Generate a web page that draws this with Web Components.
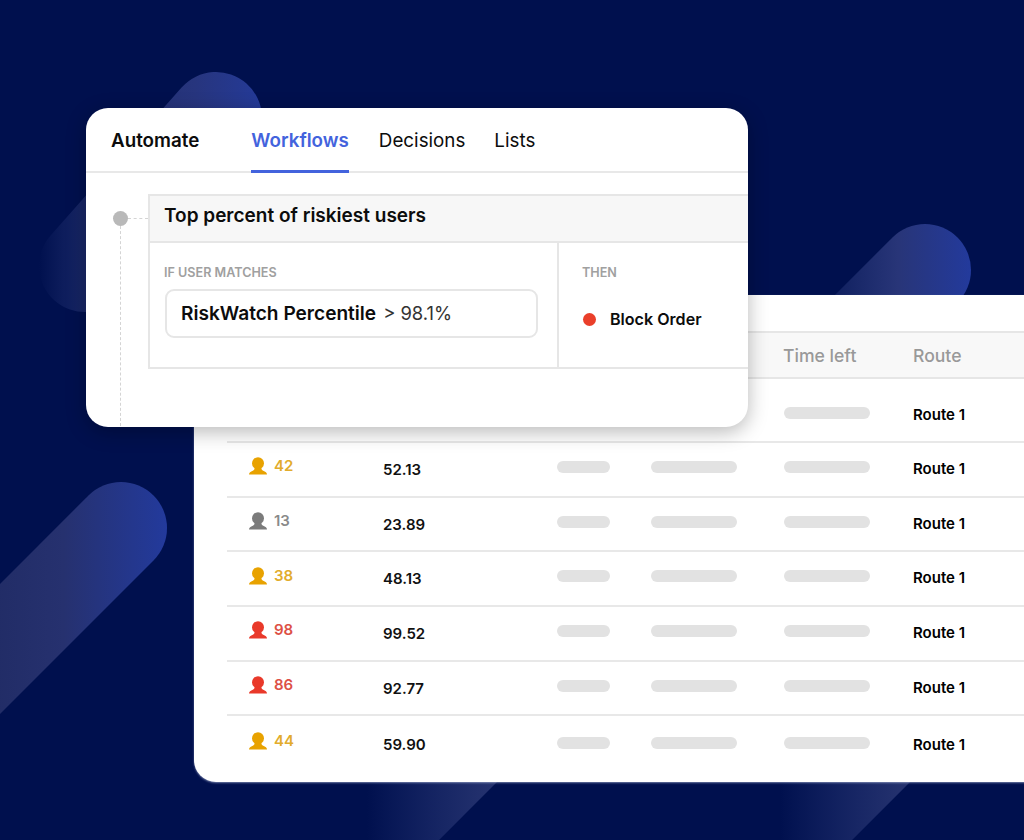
<!DOCTYPE html>
<html>
<head>
<meta charset="utf-8">
<title>Automate</title>
<style>
  html, body { margin: 0; padding: 0; background: #00104e; }
  body { font-family: Inter, "Liberation Sans", sans-serif; }
</style>
</head>
<body>

<hero-canvas>
  <bg-streaks></bg-streaks>

  <table-card>
    <risk-row route="Route 1" first></risk-row>
    <risk-row score="42" value="52.13" tone="amber" route="Route 1"></risk-row>
    <risk-row score="13" value="23.89" tone="gray" route="Route 1"></risk-row>
    <risk-row score="38" value="48.13" tone="amber" route="Route 1"></risk-row>
    <risk-row score="98" value="99.52" tone="red" route="Route 1"></risk-row>
    <risk-row score="86" value="92.77" tone="red" route="Route 1"></risk-row>
    <risk-row score="44" value="59.90" tone="amber" route="Route 1" last></risk-row>
  </table-card>

  <automate-card>
    <span slot="title">Top percent of riskiest users</span>
    <b slot="field">RiskWatch Percentile</b>
    <span slot="rule">&gt; 98.1%</span>
    <span slot="action">Block Order</span>
  </automate-card>
</hero-canvas>

<script>
class HeroCanvas extends HTMLElement {
  constructor() {
    super();
    this.attachShadow({ mode: 'open' });
    this.shadowRoot.innerHTML = `
      <style>
        :host {
          display: block;
          position: relative;
          width: 1024px;
          height: 840px;
          overflow: hidden;
          background: #00104e;
          font-family: Inter, "Liberation Sans", sans-serif;
        }
      </style>
      <slot></slot>
    `;
  }
}

// the soft diagonal bars behind the cards
class BgStreaks extends HTMLElement {
  constructor() {
    super();
    this.attachShadow({ mode: 'open' });
    this.shadowRoot.innerHTML = `
      <style>
        :host { position: absolute; inset: 0; display: block; }
        svg { display: block; }
      </style>
      <svg width="1024" height="840" viewBox="0 0 1024 840" fill="none">
        <defs>
          <linearGradient id="a" gradientUnits="userSpaceOnUse" x1="39" y1="0" x2="262" y2="0">
            <stop offset="0" stop-color="#2a3a7c" stop-opacity="0"/>
            <stop offset=".3" stop-color="#263272" stop-opacity=".9"/>
            <stop offset=".7" stop-color="#27357e"/>
            <stop offset="1" stop-color="#243a98"/>
          </linearGradient>
          <linearGradient id="b" gradientUnits="userSpaceOnUse" x1="-40" y1="0" x2="167" y2="0">
            <stop offset="0" stop-color="#1f2a62"/>
            <stop offset=".5" stop-color="#26316f"/>
            <stop offset="1" stop-color="#233a9c"/>
          </linearGradient>
          <linearGradient id="c" gradientUnits="userSpaceOnUse" x1="825" y1="0" x2="971" y2="0">
            <stop offset="0" stop-color="#2a3a7c" stop-opacity=".3"/>
            <stop offset=".5" stop-color="#283578"/>
            <stop offset="1" stop-color="#233a9c"/>
          </linearGradient>
          <linearGradient id="d" gradientUnits="userSpaceOnUse" x1="367" y1="0" x2="497" y2="0">
            <stop offset="0" stop-color="#2a3a7c" stop-opacity="0"/>
            <stop offset="1" stop-color="#26336f"/>
          </linearGradient>
          <linearGradient id="e" gradientUnits="userSpaceOnUse" x1="780" y1="0" x2="910" y2="0">
            <stop offset="0" stop-color="#2a3a7c" stop-opacity="0"/>
            <stop offset="1" stop-color="#26336f"/>
          </linearGradient>
        </defs>
        <g stroke-width="92" stroke-linecap="round">
          <line x1="216" y1="118" x2="85" y2="266" stroke="url(#a)"/>
          <line x1="121" y1="528" x2="-180" y2="829" stroke="url(#b)"/>
          <line x1="925" y1="270" x2="760" y2="435" stroke="url(#c)"/>
          <line x1="500" y1="714" x2="340" y2="874" stroke="url(#d)"/>
          <line x1="913" y1="714" x2="753" y2="874" stroke="url(#e)"/>
        </g>
      </svg>
    `;
  }
}

class TableCard extends HTMLElement {
  constructor() {
    super();
    this.attachShadow({ mode: 'open' });
    this.shadowRoot.innerHTML = `
      <style>
        :host {
          position: absolute;
          left: 194px;
          top: 295px;
          width: 870px;
          height: 487px;
          box-sizing: border-box;
          padding: 36px 0 0 33px;
          background: #fff;
          border-radius: 22px;
          box-shadow: 0 1px 2px rgba(180,190,220,.6);
        }
        #head {
          display: grid;
          grid-template-columns: 556px 130px 1fr;
          height: 43px;
          padding-top: 1px;
          align-items: center;
          background: #f8f8f8;
          border-top: 2px solid #e6e6e6;
          border-bottom: 2px solid #e6e6e6;
          color: #999;
          font-size: 17.6px;
          font-weight: 500;
        }
        #head span:first-child { grid-column: 2; }
      </style>
      <div id="head">
        <span>Time left</span>
        <span>Route</span>
      </div>
      <slot></slot>
    `;
  }
}

class RiskRow extends HTMLElement {
  connectedCallback() {
    const score = this.getAttribute('score');
    const value = this.getAttribute('value');
    const tone = this.getAttribute('tone') || 'gray';
    const route = this.getAttribute('route');
    const first = this.hasAttribute('first');
    const last = this.hasAttribute('last');
    const who = score ? `
      <svg width="18" height="18" viewBox="0 0 18 18">
        <circle cx="9" cy="6.2" r="6"/>
        <path d="M0 17.6C0 15.6 1.6 14.6 3.8 13.8 5 13.3 5.6 12.4 5.6 10.5H12.4C12.4 12.4 13 13.3 14.2 13.8 16.4 14.6 18 15.6 18 17.6Z"/>
      </svg>
      <span>${score}</span>` : '';
    this.attachShadow({ mode: 'open' });
    this.shadowRoot.innerHTML = `
      <style>
        :host {
          display: block;
          font-size: 15px;
          font-weight: 600;
          color: #111;
        }
        #row {
          display: grid;
          grid-template-columns: 134px 174px 94px 133px 129px 1fr;
          align-items: center;
          box-sizing: border-box;
          height: ${first ? 64 : last ? 56 : 54.7}px;
          padding: ${first ? '10px' : '0'} 0 0 22px;
          border-bottom: ${last ? 0 : 2}px solid #e8e8e8;
        }
        #who {
          display: flex;
          align-items: center;
          gap: 7px;
          padding-bottom: 6px;
          line-height: 18px;
        }
        #who svg { fill: var(--icon); display: block; flex: none; }
        #who span { color: var(--num); }
        .amber { --icon: #e8a200; --num: #e2ac2c; }
        .gray { --icon: #7b7b7b; --num: #8a8a8a; }
        .red { --icon: #e9392a; --num: #dd5045; }
        .bar {
          height: 12px;
          margin-bottom: ${last ? 3 : 5}px;
          border-radius: 6px;
          background: #e2e2e2;
        }
        .route { padding-bottom: ${last ? 0 : 2}px; color: #000; }
      </style>
      <div id="row">
        <div id="who" class="${tone}">${who}</div>
        <div class="val">${value || ''}</div>
        <div class="bar" style="width:53px"></div>
        <div class="bar" style="width:86px"></div>
        <div class="bar" style="width:86px"></div>
        <div class="route">${route}</div>
      </div>
    `;
  }
}

class AutomateCard extends HTMLElement {
  constructor() {
    super();
    this.attachShadow({ mode: 'open' });
    this.shadowRoot.innerHTML = `
      <style>
        :host {
          position: absolute;
          left: 86px;
          top: 108px;
          width: 662px;
          height: 319px;
          background: #fff;
          border-radius: 22px;
          box-shadow: 0 5px 20px rgba(0,0,0,.28);
          overflow: hidden;
          color: #0c0c0c;
          font-size: 18.8px;
        }
        nav {
          display: flex;
          height: 65px;
          box-sizing: border-box;
          padding-left: 25px;
          border-bottom: 2px solid #e8e8e8;
        }
        nav a {
          display: block;
          height: 65px;
          box-sizing: border-box;
          padding-top: 22px;
          line-height: 22px;
          margin-right: 29px;
        }
        nav a.brand { font-weight: 600; margin-right: 52px; }
        nav a.on {
          color: #4363dd;
          font-weight: 600;
          margin-right: 30px;
          border-bottom: 3px solid #4363dd;
        }
        #flow {
          display: flex;
          align-items: flex-start;
          height: 252px;
        }
        #rail {
          position: relative;
          width: 62px;
          height: 252px;
          flex: none;
        }
        #dot {
          position: absolute;
          left: 27px;
          top: 38px;
          width: 15px;
          height: 15px;
          border-radius: 50%;
          background: #b9b9b9;
        }
        #rail i {
          position: absolute;
          display: block;
        }
        #across {
          left: 42px;
          top: 45px;
          width: 20px;
          border-top: 1px dashed #d4d4d4;
        }
        #down {
          left: 34px;
          top: 53px;
          height: 200px;
          border-left: 1px dashed #d4d4d4;
        }
        #panel {
          flex: 1;
          margin-top: 21px;
          border: 2px solid #e6e6e6;
          border-right: 0;
        }
        #title {
          height: 47px;
          box-sizing: border-box;
          padding: 9px 0 0 14px;
          line-height: 22px;
          font-size: 19px;
          background: #f7f7f7;
          border-bottom: 2px solid #e6e6e6;
          font-weight: 600;
        }
        #body {
          display: grid;
          grid-template-columns: 407px 1fr;
          height: 124px;
        }
        #body > div { padding: 22px 0 0 14px; }
        #then { border-left: 2px solid #e6e6e6; padding-left: 23px !important; }
        h4 {
          margin: 0;
          font-size: 12.6px;
          line-height: 16px;
          font-weight: 600;
          color: #a0a0a0;
        }
        #match {
          display: flex;
          gap: 7px;
          align-items: center;
          width: 373px;
          height: 49px;
          box-sizing: border-box;
          margin: 8px 0 0 1px;
          padding: 0 0 1px 14px;
          border: 2px solid #e6e6e6;
          border-radius: 9px;
          color: #333;
          font-size: 18.4px;
        }
        ::slotted(b) { font-weight: 600; color: #0c0c0c; font-size: 19.1px; }
        #act {
          display: flex;
          align-items: center;
          gap: 14px;
          margin-top: 28px;
          padding-left: 1px;
          line-height: 20px;
          font-size: 16.1px;
          font-weight: 600;
        }
        #act i {
          display: block;
          width: 13px;
          height: 13px;
          border-radius: 50%;
          background: #ea3f2a;
        }
      </style>
      <nav>
        <a class="brand">Automate</a>
        <a class="on">Workflows</a>
        <a>Decisions</a>
        <a>Lists</a>
      </nav>
      <div id="flow">
        <div id="rail">
          <i id="across"></i>
          <i id="down"></i>
          <div id="dot"></div>
        </div>
        <div id="panel">
          <div id="title"><slot name="title"></slot></div>
          <div id="body">
            <div>
              <h4>IF USER MATCHES</h4>
              <div id="match"><slot name="field"></slot><slot name="rule"></slot></div>
            </div>
            <div id="then">
              <h4>THEN</h4>
              <div id="act"><i></i><slot name="action"></slot></div>
            </div>
          </div>
        </div>
      </div>
    `;
  }
}

customElements.define('hero-canvas', HeroCanvas);
customElements.define('bg-streaks', BgStreaks);
customElements.define('table-card', TableCard);
customElements.define('risk-row', RiskRow);
customElements.define('automate-card', AutomateCard);
</script>
</body>
</html>
